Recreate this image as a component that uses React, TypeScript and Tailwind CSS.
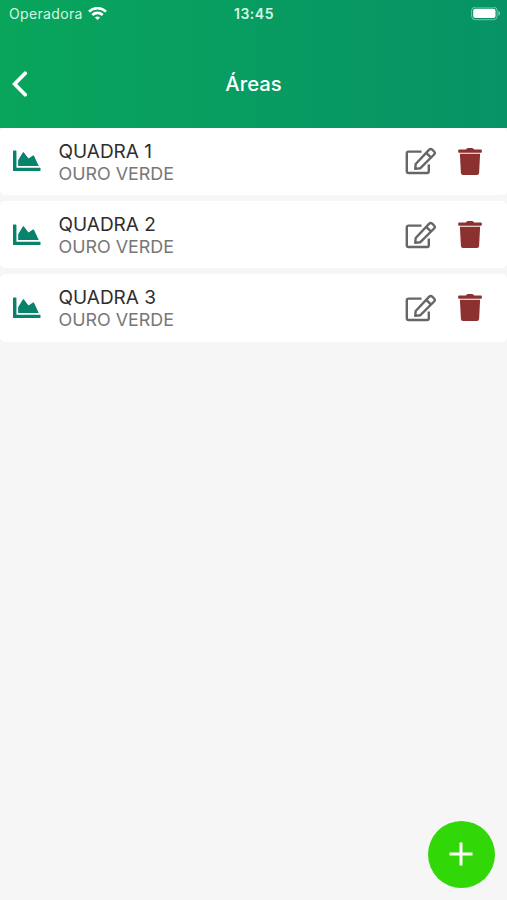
import { FaChartArea } from 'react-icons/fa'

const areas = [
  { id: 1, name: 'QUADRA 1', farm: 'OURO VERDE' },
  { id: 2, name: 'QUADRA 2', farm: 'OURO VERDE' },
  { id: 3, name: 'QUADRA 3', farm: 'OURO VERDE' },
]

function StatusBar() {
  return (
    <div className="grid h-7 grid-cols-3 items-center pl-[9px] pr-[6px] text-[#d5f5e3]">
      <div className="flex items-center gap-[5px]">
        <span className="pb-px text-[14px] leading-none tracking-[0.35px]">Operadora</span>
        <svg width="19" height="14" viewBox="0 0 19 14" fill="none" stroke="white" strokeWidth="2.6">
          <path d="M1 4.6C5.8 0 13.2 0 18 4.6" />
          <path d="M4.3 8c3-2.8 7.4-2.8 10.4 0" />
          <path d="M9.5 13.1 6.9 10.5c1.5-1.3 3.7-1.3 5.2 0z" fill="white" stroke="none" />
        </svg>
      </div>
      <span className="pb-px pr-[2px] text-center text-[14px] font-semibold leading-none tracking-[0.5px]">13:45</span>
      <svg className="justify-self-end" width="30" height="14" viewBox="0 0 30 14">
        <rect x=".6" y=".1" width="25.5" height="12.6" rx="3.6" fill="none" stroke="white" strokeOpacity=".45" />
        <rect x="2.2" y="1.7" width="22.3" height="9.4" rx="2" fill="white" />
        <path d="M27.4 4.1c2.2.8 2.2 3.8 0 4.6z" fill="white" fillOpacity=".5" />
      </svg>
    </div>
  )
}

function EditIcon() {
  return (
    <svg width="32" height="28" viewBox="0 0 32 28" fill="none" stroke="#666666" strokeWidth="2.4" strokeLinejoin="round">
      <path d="M16.5 4.6H3.6Q1.8 4.6 1.8 6.4v17.8Q1.8 26 3.6 26H22q1.8 0 1.8-1.8v-6.6" />
      <path d="M10.7 17 24.2 2.6q1.5-1.4 3 0l1.9 1.9q1.4 1.5 0 3L15.4 21.2l-5.2.7z" />
      <path d="m21.2 5.8 4.9 4.9" />
    </svg>
  )
}

function TrashIcon() {
  return (
    <svg width="24" height="27" viewBox="0 0 24 27" fill="#8d3030">
      <path d="M1 1.5h6.8L8.8.4Q9.2 0 9.8 0h4.4q.6 0 1 .4l1 1.1H23q.8 0 .8.8v1.6q0 .8-.8.8H1q-.8 0-.8-.8V2.3q0-.8.8-.8z" />
      <path d="M1.9 5.8h20.2l-1 19.2q-.2 1.9-2.1 1.9H5q-1.9 0-2.1-1.9z" />
    </svg>
  )
}

function AreaRow({ name, farm }: { name: string; farm: string }) {
  return (
    <li className="flex h-[67.4px] items-center rounded-[5px] bg-white pl-[13px] pr-[25px]">
      <FaChartArea size={27.5} className="text-[#07826b]" />
      <div className="ml-[18px] flex-1 pt-0.5">
        <h2 className="text-[19px] leading-[23px] text-[#2e2e2e]">{name}</h2>
        <p className="text-[17.9px] leading-[22px] text-[#777777]">{farm}</p>
      </div>
      <button aria-label="Editar">
        <EditIcon />
      </button>
      <button aria-label="Excluir" className="ml-[21px]">
        <TrashIcon />
      </button>
    </li>
  )
}

export default function App() {
  return (
    <div className="relative h-[900px] w-[507px] overflow-hidden bg-[#f6f6f6] font-['Inter','Liberation_Sans',sans-serif]">
      <header className="h-[127.5px] bg-linear-to-r from-[#09a55b] to-[#079366] text-white">
        <StatusBar />
        <div className="grid h-[111px] grid-cols-[40px_1fr_40px] items-center">
          <button aria-label="Voltar" className="pl-[11px]">
            <svg width="17" height="26" viewBox="0 0 17 26" fill="none" stroke="white" strokeWidth="3.7" strokeLinecap="round" strokeLinejoin="miter">
              <path d="M14.2 2.2 3.6 13l10.6 10.8" />
            </svg>
          </button>
          <h1 className="text-center text-[20.3px] font-medium leading-6">Áreas</h1>
        </div>
      </header>

      <ul className="flex flex-col gap-[6px]">
        {areas.map((area) => (
          <AreaRow key={area.id} name={area.name} farm={area.farm} />
        ))}
      </ul>

      <button
        aria-label="Adicionar"
        className="absolute bottom-[12.5px] right-[12.5px] flex size-[67px] items-center justify-center rounded-full bg-[#31d706]"
      >
        <svg width="24" height="24" viewBox="0 0 24 24" stroke="white" strokeWidth="3">
          <path d="M12 .5v23M.5 12h23" />
        </svg>
      </button>
    </div>
  )
}
